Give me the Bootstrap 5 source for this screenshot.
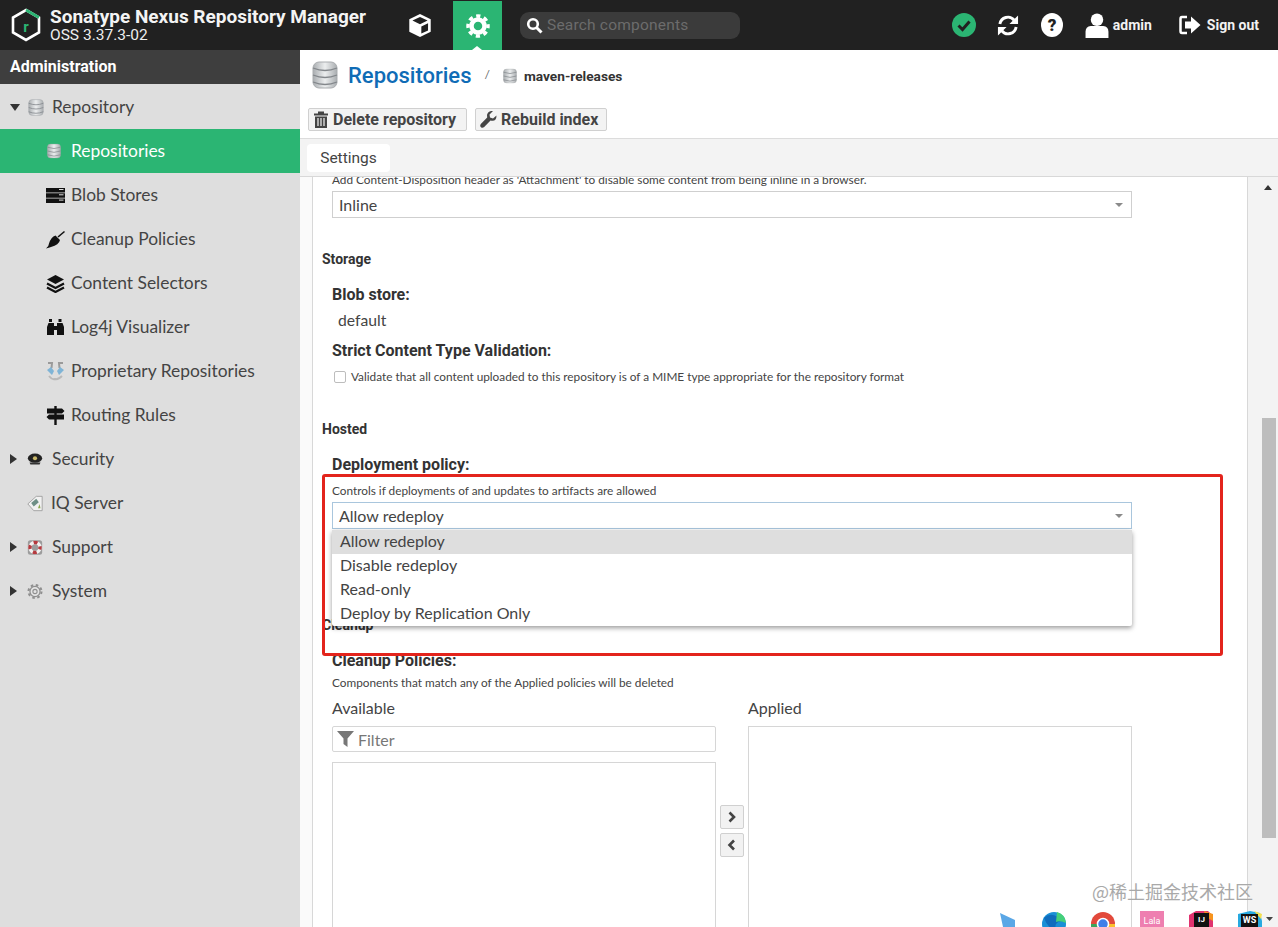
<!DOCTYPE html>
<html lang="en"><head><meta charset="utf-8"><title>Nexus Repository Manager</title>
<link href="https://cdn.jsdelivr.net/npm/bootstrap@5.3.0/dist/css/bootstrap.min.css" rel="stylesheet">
<style>
html,body{height:100%}
body{font-family:Lato,"Open Sans",sans-serif;color:#444;background:#fff;overflow:hidden;position:relative}
.app-top{height:50px;background:#212121;color:#fff}
.brand-wrap{width:390px;padding-left:11px}
.brand-name{font:700 19px/20px Roboto,sans-serif;white-space:nowrap;color:#f4f4f4}
.brand-ver{font:400 15.5px/17px Roboto,sans-serif;color:#eee}
.top-ico{width:62px;height:50px}
.top-gear{width:49px;height:49px;margin-top:1px;background:#2bb573;position:relative;margin-left:2px}
.top-gear:after{content:"";position:absolute;left:19px;bottom:0;border:5px solid transparent;border-bottom:4px solid #fff;border-top:0}
.find{width:220px;height:27px;background:#3b3b3b;border-radius:9px;margin-left:18px;padding-left:6px;color:#6c6c6c;font:400 15.5px Roboto,sans-serif;letter-spacing:.2px}
.top-right{margin-left:auto;padding-right:19px}
.top-lab{font:700 14px Roboto,sans-serif;color:#f2f2f2}
.app-body{height:877px}
.side{width:300px;background:#dedede;flex:none}
.side-head{height:34px;background:#3e3e3e;color:#fff;font:700 16px/34px Roboto,sans-serif;padding-left:10px;margin-bottom:1px}
.side-row{height:44px;font-size:17.4px;color:#444;white-space:nowrap}
.lvl1{padding-left:10px}.lvl2{padding-left:46px}
.side-row.on{background:#2bb573;color:#fff}
.tri{width:0;height:0;border-left:7px solid #333;border-top:5px solid transparent;border-bottom:5px solid transparent;margin-right:10px;flex:none}
.tri.open{border-top:7px solid #333;border-left:5px solid transparent;border-right:5px solid transparent;border-bottom:0;margin-right:8px}
.tri.none{border-color:transparent}
.side-ic{width:19px;height:19px;flex:none;margin-right:6px}
.side-ic.db-small{width:14px;height:16px;margin:0 10px 0 1px}
.lvl1 .side-ic{width:16px;height:17px;margin-right:9px}
.main-col{min-width:0}
.title-bar{height:52px;padding:0 0 2px 12px;flex:none}
.title-main{font-size:22px;color:#0f6cb6;margin-left:9px;font-family:Roboto,sans-serif;font-weight:500}
.crumb-sep{color:#666;font-size:12px;margin:0 13px}
.crumb-name{font:700 13.7px Roboto,sans-serif;color:#333;margin-left:7px;padding-top:2px}
.act-bar{height:30px;padding:6px 0 0 8px;gap:8px;border-bottom:1px solid #dcdcdc;box-sizing:content-box;flex:none;align-items:flex-start}
.act-btn{height:23px;background:#f3f3f3;border:1px solid #d0d0d0;border-radius:2px;color:#444;font:700 16px/21px Roboto,sans-serif;padding:0 8px 0 4px;display:flex;align-items:center;gap:4px}
.act-wide{padding-right:10px}
.tabs-bar{height:32px;background:#f3f3f3;padding:5px 0 0 7px;border-bottom:1px solid #d8d8d8;box-sizing:content-box;flex:none}
.tab-one{width:83px;height:28px;background:#fff;border-radius:4px;text-align:center;font:400 15.5px/28px Roboto,sans-serif;color:#444}
.work{height:750px;flex:none;position:relative}
.gut-l{width:12px;background:#fafafa;border-right:1px solid #d8d8d8;box-sizing:content-box;flex:none}
.sheet{width:925px;flex:none;overflow:hidden;position:relative;padding-left:9px;border-right:1px solid #d8d8d8;box-sizing:content-box}
.gut-r{background:#f3f3f3;position:relative}
.sb-up{position:absolute;left:16px;top:8px;border:4px solid transparent;border-bottom:5px solid #333;border-top:0}
.sb-thumb{position:absolute;left:14px;top:241px;width:14px;height:420px;background:#bdbdbd}
.hint{font:400 11.8px/14px Lato,sans-serif;color:#444;margin:0;white-space:nowrap}
.sec{font:700 14px/16px Roboto,sans-serif;color:#333;margin:0}
.lab{font:700 16px/18px Roboto,sans-serif;color:#333;margin:0}
.fld{margin-left:10px}
.sel{width:800px;height:27px;border:1px solid #cfcfcf;padding:0 6px;font:400 16px/25px Lato,sans-serif;color:#444}
.sel.act{border-color:#a9c6dd}
.car{width:0;height:0;border:4px solid transparent;border-top:4px solid #8a8a8a;border-bottom:0;margin-right:2px}
.chk{width:12px;height:12px;border:1px solid #bdbdbd;border-radius:2px;background:#fff;margin:0 5px 0 2px;flex:none}
.pop{position:absolute;left:19px;top:353px;width:800px;background:#fff;box-shadow:0 2px 5px rgba(0,0,0,.4);border-radius:2px;z-index:3}
.pop div{height:24px;padding-left:8px;font:400 16px/21px Lato,sans-serif;color:#444}
.pop div.hl{background:#dedede}
.box{border:1px solid #d6d6d6}
.filt{height:26px;width:384px;border-radius:2px;color:#777;font:400 16px Lato,sans-serif;padding-left:4px}
.mv{width:24px;height:24px;background:#f2f2f2;border:1px solid #d0d0d0;border-radius:2px}
.col-cap{font:400 16px/34px Lato,sans-serif}
.red-mark{position:absolute;left:322px;top:474px;width:901px;height:182px;border:3px solid #e3241c;border-radius:3px;z-index:5;pointer-events:none}
.wm{position:absolute;left:1092px;top:880px;font:400 18px/22px "Noto Sans CJK SC",sans-serif;color:#a9a9a9;z-index:6;white-space:nowrap}
.dock{position:absolute;left:1000px;top:911px;width:278px;height:16px;overflow:hidden;z-index:6}
</style></head><body>

<svg width="0" height="0" class="position-absolute">
<defs>
<linearGradient id="dbg" x1="0" x2="1" y1="0" y2="0"><stop offset="0" stop-color="#a9adb0"/><stop offset=".5" stop-color="#eceeef"/><stop offset="1" stop-color="#a9adb0"/></linearGradient>
<symbol id="db" viewBox="0 0 26 28"><rect x="1" y="1" width="24" height="26" rx="6" fill="url(#dbg)" stroke="#a9acaf"/><path d="M1 7q12 5 24 0M1 14q12 5 24 0M1 21q12 5 24 0" fill="none" stroke="#83878b" stroke-width="1.300"/></symbol>
</defs></svg>

<header class="app-top d-flex align-items-center">
  <div class="brand-wrap d-flex align-items-center flex-none" style="gap:9px">
    <svg width="30" height="34" viewBox="0 0 30 34"><path d="M15 2 28 9.500V24.500L15 32 2 24.500V9.500Z" fill="none" stroke="#fff" stroke-width="2.600"/><path d="M15 2 28 9.500" stroke="#2bb573" stroke-width="2.800"/><text x="15" y="24" text-anchor="middle" fill="#2bb573" font-family="Roboto" font-weight="700" font-size="15">r</text></svg>
    <div><div class="brand-name">Sonatype Nexus Repository Manager</div><div class="brand-ver">OSS 3.37.3-02</div></div>
  </div>
  <div class="top-ico d-flex align-items-center justify-content-center" style="margin-left:-1px">
    <svg width="26" height="25" viewBox="0 0 26 28"><path d="M13 1 25 7V21L13 27 1 21V7Z" fill="#fff"/><path d="M4.500 8.500 13 4.500 21.500 8.500 13 12.500Z" fill="#212121"/><path d="M14.500 15 22 11.500V19.500L14.500 23Z" fill="#212121"/></svg>
  </div>
  <div class="top-gear d-flex align-items-center justify-content-center">
    <svg width="24" height="24" viewBox="0 0 24 24"><circle cx="12" cy="12" r="6.500" fill="none" stroke="#fff" stroke-width="4.500"/><circle cx="12" cy="12" r="10" fill="none" stroke="#fff" stroke-width="3.500" stroke-dasharray="4.200 3.650" stroke-dashoffset="2.100"/></svg>
  </div>
  <div class="find d-flex align-items-center gap-1">
    <svg width="17" height="17" viewBox="0 0 17 17"><circle cx="7" cy="7" r="4.800" fill="none" stroke="#fff" stroke-width="2.600"/><path d="M10.500 10.500 15.500 15.500" stroke="#fff" stroke-width="3"/></svg>
    <span>Search components</span>
  </div>
  <div class="top-right d-flex align-items-center">
    <svg width="24" height="24" viewBox="0 0 24 24" style="margin-right:21px"><circle cx="12" cy="12" r="12" fill="#2bb573"/><path d="M6.500 12.500 10.500 16.500 17.500 8.500" fill="none" stroke="#212121" stroke-width="3"/></svg>
    <svg width="22" height="23" viewBox="0 0 23 23" style="margin-right:22px"><path d="M3 10a8.500 8.500 0 0 1 15-4" fill="none" stroke="#fff" stroke-width="3"/><path d="M22 1v9h-9z" fill="#fff"/><path d="M20 13a8.500 8.500 0 0 1-15 4" fill="none" stroke="#fff" stroke-width="3"/><path d="M1 22v-9h9z" fill="#fff"/></svg>
    <svg width="22" height="24" viewBox="0 0 22 24" style="margin-right:22px"><ellipse cx="11" cy="12" rx="11" ry="12" fill="#fff"/><text x="11" y="18" text-anchor="middle" font-family="Roboto" font-weight="900" font-size="17" fill="#212121">?</text></svg>
    <svg width="24" height="25" viewBox="0 0 22 24" style="margin-right:4px"><circle cx="11" cy="6.500" r="6" fill="#fff"/><path d="M0 24V18q0-5 5-5.500h12q5 .5 5 5.500v6z" fill="#fff"/></svg>
    <span class="top-lab" style="margin-right:27px">admin</span>
    <svg width="22" height="20" viewBox="0 0 22 20" style="margin-right:6px"><path d="M8 2H3Q1.500 2 1.500 4V16Q1.500 18 3 18H8" fill="none" stroke="#fff" stroke-width="2.500"/><path d="M6 6.500h6V1.500L21.500 10 12 18.500V13.500H6z" fill="#fff"/></svg>
    <span class="top-lab">Sign out</span>
  </div>
</header>

<div class="app-body d-flex">
  <nav class="side">
    <div class="side-head">Administration</div>
    <div class="side-row lvl1 d-flex align-items-center"><span class="tri open"></span><svg class="side-ic" viewBox="0 0 26 28" style="margin-right:8px"><use href="#db"/></svg><span>Repository</span></div>
    <div class="side-row lvl2 on d-flex align-items-center"><svg class="side-ic db-small" viewBox="0 0 26 28"><use href="#db"/></svg>Repositories</div>
    <div class="side-row lvl2 d-flex align-items-center">
      <svg class="side-ic" viewBox="0 0 19 19"><path d="M0 2h19v4.500H0zM0 7.300h19v4.500H0zM0 12.600h19v4.500H0z" fill="#111"/><path d="M13 3.500h4.500M13 8.800h4.500M13 14.100h4.500" stroke="#ddd"/></svg>Blob Stores</div>
    <div class="side-row lvl2 d-flex align-items-center">
      <svg class="side-ic" viewBox="0 0 19 19"><path d="M12 7 18.500 1.500" stroke="#111" stroke-width="1.600"/><path d="M9.500 5.500 14 10Q13 15 5 17 3 17.500 0 18.500 3 16 3 13.500 5 7 9.500 5.500Z" fill="#111"/></svg>Cleanup Policies</div>
    <div class="side-row lvl2 d-flex align-items-center">
      <svg class="side-ic" viewBox="0 0 19 19"><path d="M9.500 1 18 5.500 9.500 10 1 5.500Z" fill="#111"/><path d="M1 9.500 9.500 14 18 9.500M1 13.500 9.500 18 18 13.500" fill="none" stroke="#111" stroke-width="2.200"/></svg>Content Selectors</div>
    <div class="side-row lvl2 d-flex align-items-center">
      <svg class="side-ic" viewBox="0 0 19 19"><path d="M3 1h3v3H3zM12.500 1h3v3h-3z" fill="#111"/><path d="M2.500 5H8V17H1V9ZM11 5h5.500L18 9v8h-7zM8 8h3v4H8z" fill="#111"/></svg>Log4j Visualizer</div>
    <div class="side-row lvl2 d-flex align-items-center">
      <svg class="side-ic" viewBox="0 0 19 19"><path d="M2 1h4l-.5 5M17 1h-4l.5 5" fill="none" stroke="#9a9a9a" stroke-width="2"/><path d="M1 8 5 5 8 9 6 13ZM18 8 14 5 11 9 13 13Z" fill="#7fb4d6"/><path d="M3 14q3 4 6 3 3 1 7-3" fill="none" stroke="#b9b9b9" stroke-width="2"/></svg>Proprietary Repositories</div>
    <div class="side-row lvl2 d-flex align-items-center">
      <svg class="side-ic" viewBox="0 0 19 19"><path d="M8.300 0h2.400v19H8.300z" fill="#111"/><path d="M1 2.500H16L18.500 5 16 7.500H1ZM18 8.500H3L.5 11 3 13.500H18Z" fill="#111"/></svg>Routing Rules</div>
    <div class="side-row lvl1 d-flex align-items-center"><span class="tri"></span><svg class="side-ic" viewBox="0 0 19 19"><ellipse cx="9.500" cy="8" rx="8.500" ry="5.500" fill="#222"/><path d="M3 13h13l-1 2.500H4z" fill="#333"/><circle cx="9.500" cy="8" r="2.500" fill="#c9b869"/></svg><span>Security</span></div>
    <div class="side-row lvl1 d-flex align-items-center"><span class="tri none"></span><svg class="side-ic" viewBox="0 0 19 19" style="margin-right:8px"><path d="M1 10 11 1h7v17H8Z" fill="#f1f1f1" stroke="#9a9a9a"/><path d="M5 9 11 4l3 4-6 5Z" fill="#6e8f86"/><path d="M13 15l2-5 1 5z" fill="#8caa4f"/></svg><span>IQ Server</span></div>
    <div class="side-row lvl1 d-flex align-items-center"><span class="tri"></span><svg class="side-ic" viewBox="0 0 19 19"><rect x="1" y="1" width="17" height="17" rx="3" fill="#9c9c9c"/><circle cx="9.500" cy="9.500" r="6" fill="none" stroke="#f2f2f2" stroke-width="4"/><circle cx="9.500" cy="9.500" r="6" fill="none" stroke="#b53a3f" stroke-width="4" stroke-dasharray="4.700 4.700" stroke-dashoffset="2.300"/></svg><span>Support</span></div>
    <div class="side-row lvl1 d-flex align-items-center"><span class="tri"></span><svg class="side-ic" viewBox="0 0 19 19"><circle cx="9.500" cy="9.500" r="6" fill="#e4e4e4" stroke="#8f8f8f" stroke-width="1.500"/><circle cx="9.500" cy="9.500" r="2.500" fill="none" stroke="#8f8f8f" stroke-width="1.300"/><circle cx="9.500" cy="9.500" r="7.700" fill="none" stroke="#8f8f8f" stroke-width="2.400" stroke-dasharray="3 3.050"/></svg><span>System</span></div>
  </nav>

  <main class="main-col flex-grow-1 d-flex flex-column">
    <div class="title-bar d-flex align-items-center">
      <svg width="26" height="28" viewBox="0 0 26 28"><use href="#db"/></svg>
      <span class="title-main" style="margin-left:10px">Repositories</span>
      <span class="crumb-sep">/</span>
      <svg width="14" height="16" viewBox="0 0 26 28" style="margin-top:2px"><use href="#db"/></svg>
      <span class="crumb-name">maven-releases</span>
    </div>
    <div class="act-bar d-flex">
      <button class="act-btn act-wide" type="button"><svg width="16" height="17" viewBox="0 0 16 17"><path d="M1 2.500h14v2H1zM5 .5h6v2H5zM2 5.500h12V17H2z" fill="#444"/><path d="M5 7v8M8 7v8M11 7v8" stroke="#f3f3f3" stroke-width="1.200"/></svg>Delete repository</button>
      <button class="act-btn" type="button"><svg width="17" height="17" viewBox="0 0 17 17"><path d="M16.500 4.500 13 7.500 10 6.500 9.500 3.500 13 0Q8 -.5 7 4L7.200 6.500 .8 13Q-.5 15 1 16.300 2.500 17.500 4.200 16L10.500 9.500Q16.500 11 16.500 4.500Z" fill="#444"/></svg>Rebuild index</button>
    </div>
    <div class="tabs-bar"><div class="tab-one">Settings</div></div>
    <div class="work d-flex">
      <div class="gut-l"></div>
      <div class="sheet">
        <p class="hint fld" style="margin-top:-4px;height:14px">Add Content-Disposition header as 'Attachment' to disable some content from being inline in a browser.</p>
        <div class="sel fld d-flex justify-content-between align-items-center" style="margin-top:4px;line-height:23px">Inline<span class="car"></span></div>
        <p class="sec" style="margin-top:33px">Storage</p>
        <p class="lab fld" style="margin-top:19px">Blob store:</p>
        <div class="fld" style="font:400 15.7px/20px Lato,sans-serif;margin:6px 0 0 16px">default</div>
        <p class="lab fld" style="margin-top:12px">Strict Content Type Validation:</p>
        <div class="fld d-flex align-items-center" style="margin-top:10px;height:14px"><span class="chk"></span><span class="hint">Validate that all content uploaded to this repository is of a MIME type appropriate for the repository format</span></div>
        <p class="sec" style="margin-top:37px">Hosted</p>
        <p class="lab fld" style="margin-top:19px">Deployment policy:</p>
        <p class="hint fld" style="margin-top:10px">Controls if deployments of and updates to artifacts are allowed</p>
        <div class="sel act fld d-flex justify-content-between align-items-center" style="margin-top:4px">Allow redeploy<span class="car"></span></div>
        <div class="pop"><div class="hl">Allow redeploy</div><div>Disable redeploy</div><div>Read-only</div><div>Deploy by Replication Only</div></div>
        <p class="sec" style="margin-top:88px">Cleanup</p>
        <p class="lab fld" style="margin-top:19px">Cleanup Policies:</p>
        <p class="hint fld" style="margin-top:6px">Components that match any of the Applied policies will be deleted</p>
        <div class="fld d-flex" style="margin-top:1px;width:800px">
          <div class="col-cap" style="width:384px">Available</div>
          <div class="col-cap" style="margin-left:32px">Applied</div>
        </div>
        <div class="fld d-flex align-items-start" style="width:800px;margin-top:1px">
          <div style="width:384px">
            <div class="box filt d-flex align-items-center gap-1"><svg width="17" height="16" viewBox="0 0 17 16"><path d="M0 0h17L10.500 7.500V16L6.500 13V7.500Z" fill="#777"/></svg>Filter</div>
            <div class="box" style="height:300px;margin-top:10px"></div>
          </div>
          <div class="d-flex flex-column" style="width:24px;margin:79px 4px 0;gap:4px">
            <div class="mv d-flex align-items-center justify-content-center"><svg width="10" height="12" viewBox="0 0 10 12"><path d="M2.500 1.500 7 6 2.500 10.500" fill="none" stroke="#444" stroke-width="2.600"/></svg></div>
            <div class="mv d-flex align-items-center justify-content-center"><svg width="10" height="12" viewBox="0 0 10 12"><path d="M7 1.500 2.500 6 7 10.500" fill="none" stroke="#444" stroke-width="2.600"/></svg></div>
          </div>
          <div class="box" style="width:384px;height:340px"></div>
        </div>
      </div>
      <div class="gut-r flex-grow-1"><span class="sb-up"></span><span class="sb-thumb"></span></div>
    </div>
  </main>
</div>

<div class="red-mark"></div>
<div class="wm">@稀土掘金技术社区</div>
<svg class="dock" viewBox="0 0 278 16">
  <path d="M0 2 15 9V16H3Z" fill="#5aa7e6"/>
  <circle cx="54" cy="13" r="12" fill="#1a8fd6"/><path d="M44 7q8-8 20 4-5-2-8 2-2 5 3 7-10 0-15-13Z" fill="#0f6cbd"/><path d="M57 1q8 2 9 11-6-3-10-1Z" fill="#45d07a"/>
  <circle cx="103" cy="13" r="12" fill="#e2493b"/><path d="M103 13 115 13A12 12 0 0 1 97 24Z" fill="#fbc02d"/><path d="M103 13 97 24A12 12 0 0 1 91 13Z" fill="#3ba55c"/><circle cx="103" cy="13" r="5.500" fill="#3f7fe8" stroke="#fff" stroke-width="1.500"/>
  <rect x="140" y="0" width="24" height="16" fill="#ee7fb0"/><text x="152" y="13" text-anchor="middle" font-size="9" fill="#fff" font-family="Roboto">Lala</text>
  <path d="M189 4 196 0H208L213 5V16H189Z" fill="#e0336f"/><path d="M204 0 213 3V10L206 6Z" fill="#f7941d"/><rect x="194" y="2" width="15" height="14" fill="#111"/><text x="201.500" y="11" text-anchor="middle" font-size="8" font-weight="700" fill="#fff" font-family="Roboto">IJ</text>
  <path d="M238 3 250 0 260 2 262 10V16H238Z" fill="#27a9e0"/><path d="M254 0 262 3 261 8Z" fill="#f4e04d"/><rect x="241" y="3" width="17" height="13" fill="#111"/><text x="249.500" y="12" text-anchor="middle" font-size="9" font-weight="700" fill="#fff" font-family="Roboto">WS</text>
  <path d="M266 6h7l-3.500 4z" fill="#444"/>
</svg>
<script src="https://cdn.jsdelivr.net/npm/bootstrap@5.3.0/dist/js/bootstrap.bundle.min.js"></script>
</body></html>
